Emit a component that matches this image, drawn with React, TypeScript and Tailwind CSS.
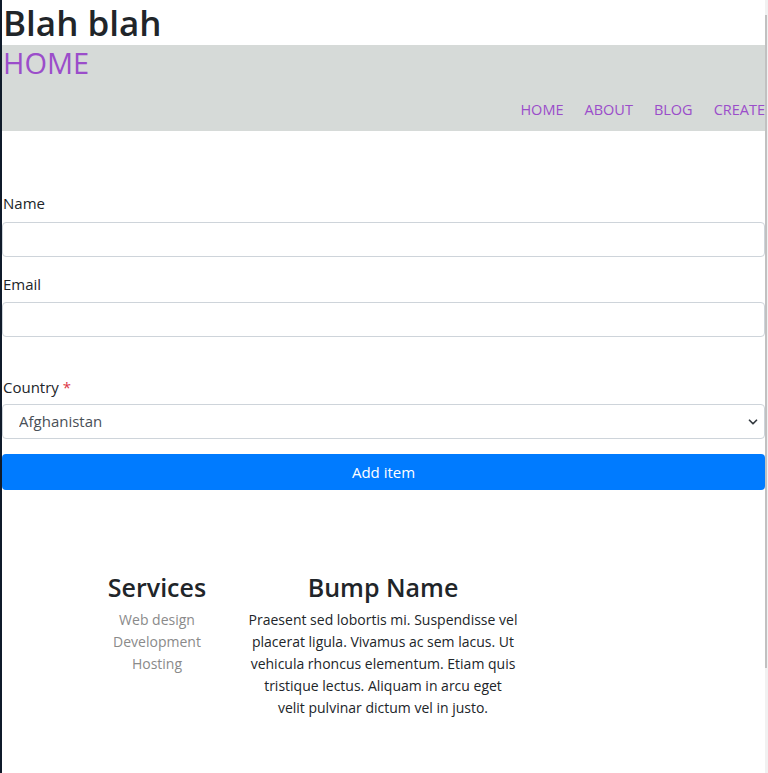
import { ChevronDown } from "lucide-react";

const navItems = ["Home", "About", "Blog", "Create"];
const services = ["Web design", "Development", "Hosting"];

function Header() {
  return (
    <header className="flex h-[86px] flex-col bg-[#d6dad8]">
      <a href="#" className="block pl-px text-[29px] leading-[36px] text-[#9b4dca]">
        HOME
      </a>
      <nav className="mt-auto flex justify-end gap-[21px] pb-[9px]">
        {navItems.map((item) => (
          <a
            key={item}
            href="#"
            className="whitespace-nowrap text-[14.5px] font-medium uppercase leading-6 text-[#9b4dca]"
          >
            {item}
          </a>
        ))}
      </nav>
    </header>
  );
}

function ItemForm() {
  return (
    <form className="flex flex-col pt-[60px] text-[#212529]">
      <label className="mb-[7px] pl-px text-[15px] leading-6">Name</label>
      <input
        type="text"
        className="h-[35px] rounded border border-[#ced4da] bg-white px-3"
      />
      <label className="mb-[6px] mt-[15px] pl-px text-[15px] leading-6">Email</label>
      <input
        type="email"
        className="h-[35px] rounded border border-[#ced4da] bg-white px-3"
      />
      <label className="mb-[5px] mt-[38px] pl-px text-[15px] leading-6">
        Country <span className="text-[#dc3545]">*</span>
      </label>
      <div className="relative">
        <select className="h-[35px] w-full appearance-none rounded border border-[#ced4da] bg-white pl-4 text-[15px] text-[#495057]">
          <option>Afghanistan</option>
          <option>Albania</option>
          <option>Algeria</option>
        </select>
        <ChevronDown
          size={14}
          strokeWidth={3}
          className="pointer-events-none absolute right-[5px] top-[11px] text-[#343a40]"
        />
      </div>
      <button
        type="button"
        className="mt-[15px] h-9 rounded bg-[#007bff] text-[15px] text-white"
      >
        Add item
      </button>
    </form>
  );
}

function Footer() {
  return (
    <footer className="flex gap-[21px] pl-[95px] pt-20 pb-14 text-center">
      <div className="w-[120px]">
        <h3 className="mb-[5px] text-[25px] font-semibold leading-[34px] text-[#212529]">
          Services
        </h3>
        <ul className="text-[14px] leading-[22px] text-[#8a8a8a]">
          {services.map((s) => (
            <li key={s}>
              <a href="#">{s}</a>
            </li>
          ))}
        </ul>
      </div>
      <div className="w-[290px]">
        <h3 className="mb-[5px] text-[25px] font-semibold leading-[34px] text-[#212529]">
          Bump Name
        </h3>
        <p className="text-[14px] leading-[22px] text-[#212529]">
          Praesent sed lobortis mi. Suspendisse vel
          <br />
          placerat ligula. Vivamus ac sem lacus. Ut
          <br />
          vehicula rhoncus elementum. Etiam quis
          <br />
          tristique lectus. Aliquam in arcu eget
          <br />
          velit pulvinar dictum vel in justo.
        </p>
      </div>
    </footer>
  );
}

export default function App() {
  return (
    <div className="flex min-h-[773px] bg-white font-['Open_Sans',sans-serif]">
      <div className="w-[2px] shrink-0 bg-[#0f1a2a]" />
      <main className="min-w-0 flex-1 overflow-hidden">
        <h1 className="h-[45px] pl-px text-[35px] font-semibold leading-[46px] text-[#212529]">
          Blah blah
        </h1>
        <Header />
        <ItemForm />
        <Footer />
      </main>
      <div className="w-[3px] shrink-0 bg-[#f1f1f1] pt-[15px]">
        <div className="h-[653px] w-[2px] bg-[#c1c1c1]" />
      </div>
    </div>
  );
}
